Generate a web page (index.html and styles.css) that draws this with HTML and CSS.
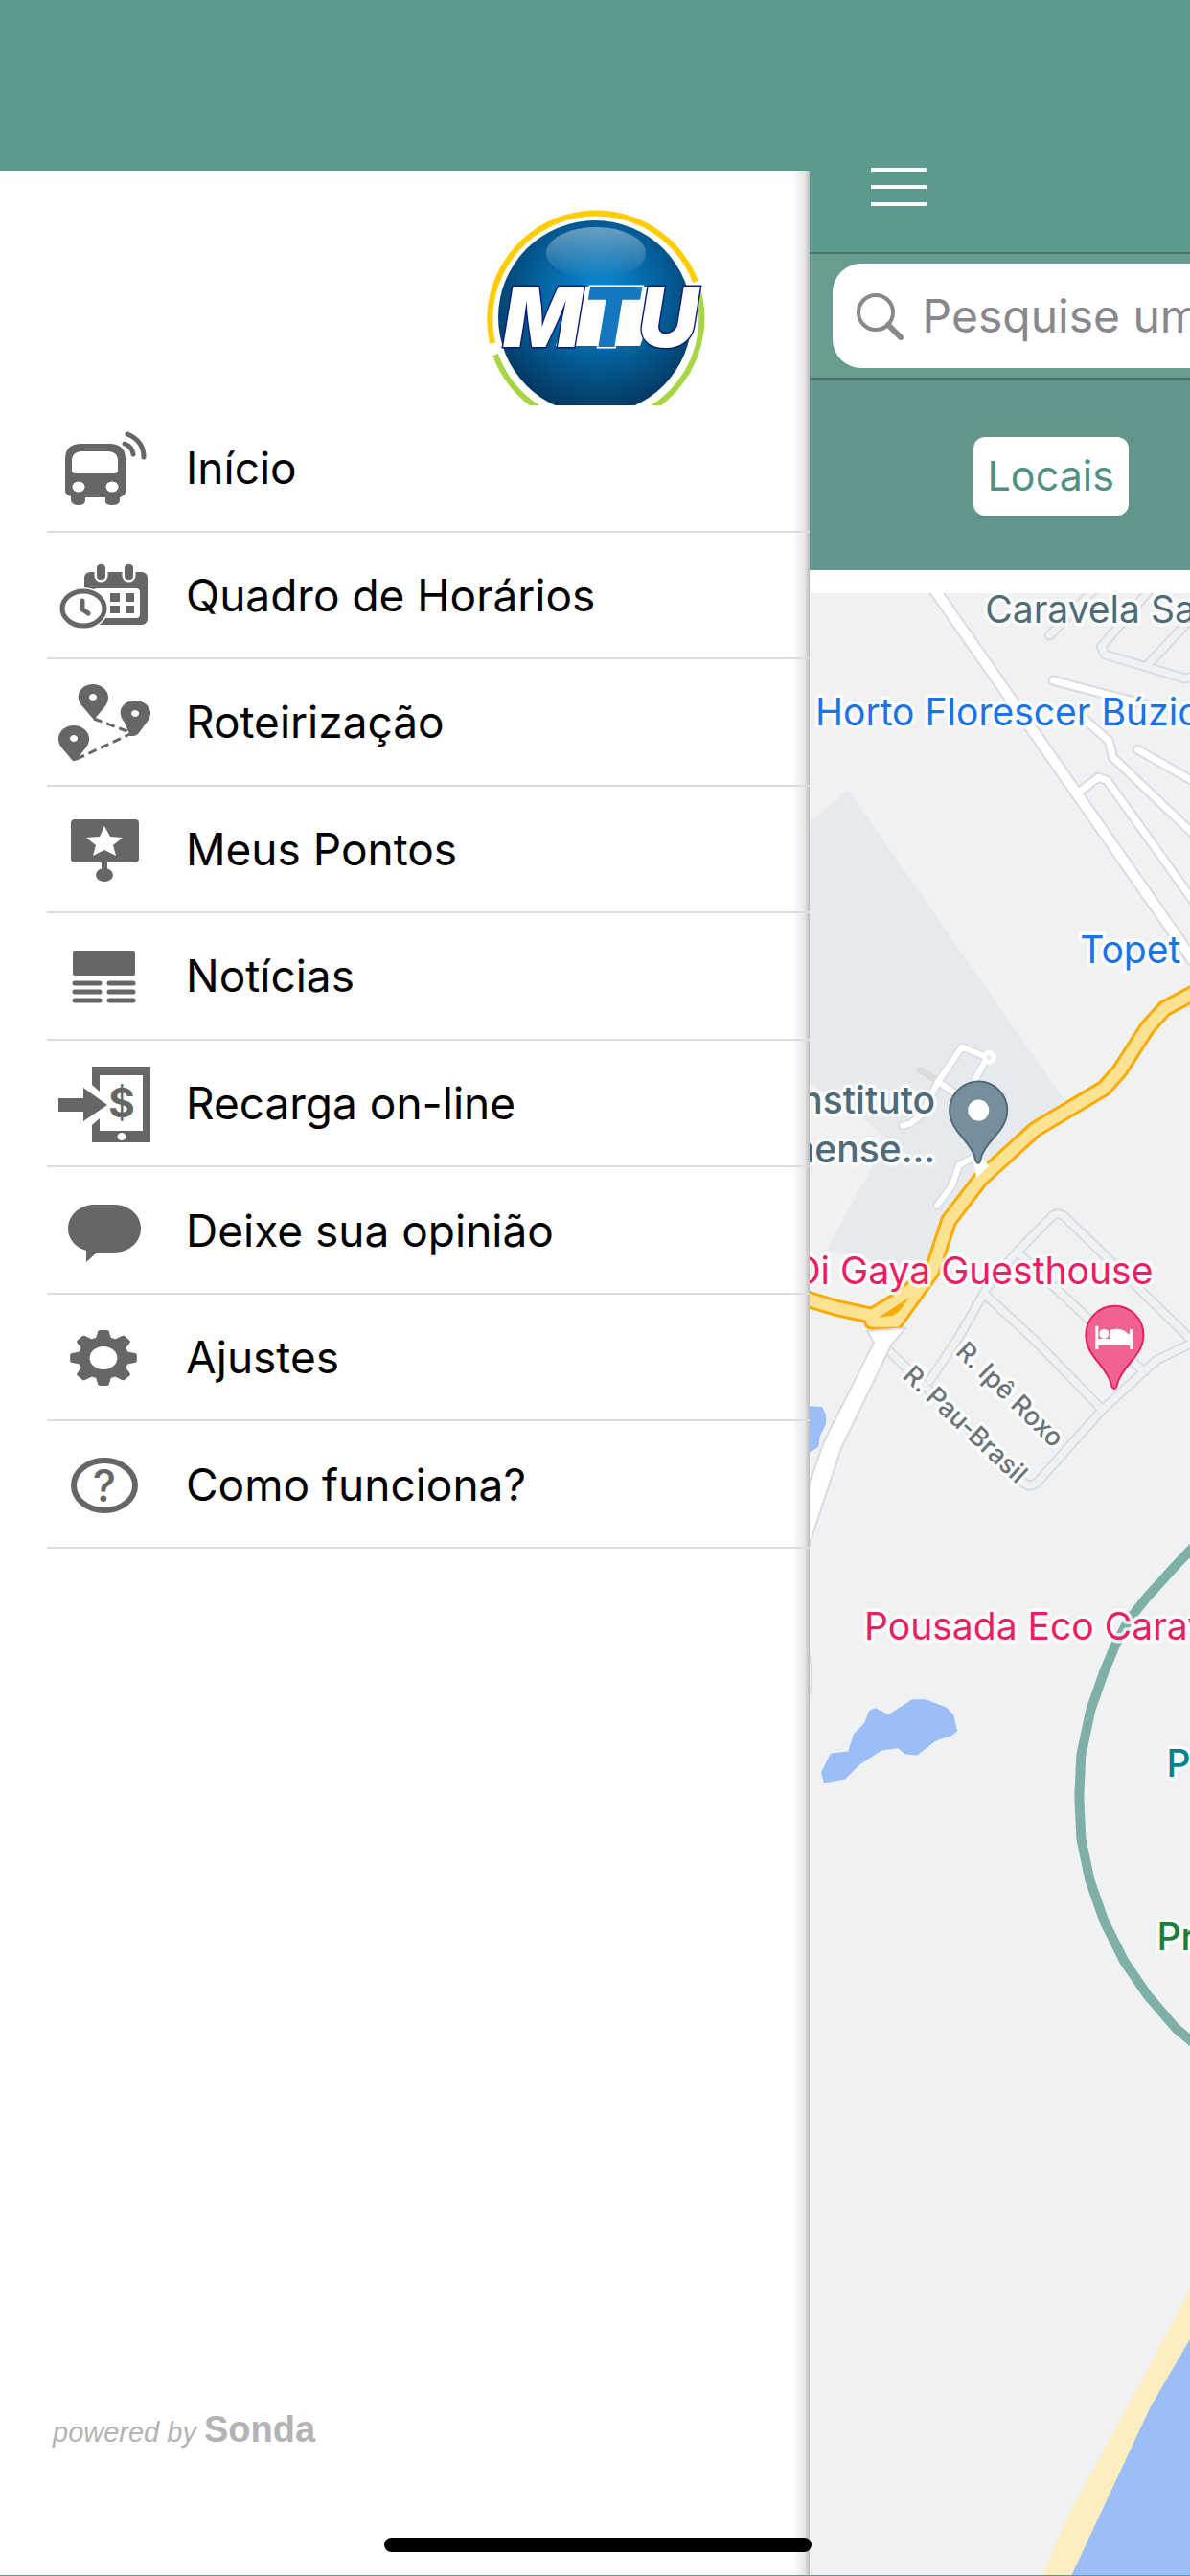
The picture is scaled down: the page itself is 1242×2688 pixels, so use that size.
FILE: index.html
```html
<!DOCTYPE html>
<html lang="pt-BR">
<head>
  <meta charset="UTF-8">
  <meta name="viewport" content="width=device-width, initial-scale=1">
  <title>MTU</title>
  <link rel="stylesheet" href="styles.css">
</head>
<body>
  <div class="app">
    <aside class="drawer">
      <div class="logo">
        <svg viewBox="508 216 228 207" role="img" aria-label="MTU">
          <defs>
            <radialGradient id="sphere" cx="0.52" cy="0.38" r="0.62">
              <stop offset="0" stop-color="#0b8bd6"/>
              <stop offset="0.5" stop-color="#04639f"/>
              <stop offset="1" stop-color="#04365f"/>
            </radialGradient>
            <linearGradient id="shine" x1="0" y1="0" x2="0" y2="1">
              <stop offset="0" stop-color="#fff" stop-opacity="0.4"/>
              <stop offset="1" stop-color="#fff" stop-opacity="0"/>
            </linearGradient>
          </defs>
          <path d="M514 358A111 111 0 0 1 726 294" fill="none" stroke="#fc0" stroke-width="6"/>
          <path d="M517 370A111 111 0 0 0 621 443A111 111 0 0 0 728 301" fill="none" stroke="#a8d544" stroke-width="6"/>
          <circle cx="621" cy="331" r="101" fill="url(#sphere)"/>
          <ellipse cx="622" cy="264" rx="52" ry="27" fill="url(#shine)"/>
          <path d="M602 299H690L668 361H580Z" fill="#fff"/>
          <text class="logo-text" x="525" y="362">M<tspan class="logo-t">T</tspan>U</text>
        </svg>
      </div>

      <nav>
        <ul class="menu">
          <li><a href="#">
            <svg class="icon" viewBox="0 0 100 90">
              <path fill-rule="evenodd" d="M10 36Q10 20 27 20H56Q73 20 73 36V70Q73 74 67 76V79Q67 84 59 84T52 79V76H31V79Q31 84 24 84T16 79V75Q10 73 10 69ZM17 38V48Q17 51 21 51H61Q65 51 65 48V38Q65 28 54 28H28Q17 28 17 38Z"/>
              <ellipse class="hole" cx="24" cy="65" rx="6.5" ry="5.5"/>
              <ellipse class="hole" cx="59" cy="65" rx="6.5" ry="5.5"/>
              <path class="line" d="M72 20Q80 23 81 31M75 10Q92 17 92 34"/>
            </svg>
            <span>Início</span></a></li>
          <li><a href="#">
            <svg class="icon" viewBox="0 0 100 90">
              <rect x="30" y="21" width="66" height="55" rx="6"/>
              <rect class="hole" x="39" y="38" width="49" height="31" rx="4"/>
              <rect class="halo" x="43" y="13" width="9" height="16" rx="4"/>
              <rect class="halo" x="72" y="13" width="9" height="16" rx="4"/>
              <path d="M57 43H67V52H57ZM73 43H82V52H73ZM57 56H67V64H57ZM73 56H82V64H73Z"/>
              <ellipse class="hole" cx="29" cy="59" rx="26" ry="22"/>
              <ellipse class="line" cx="29" cy="59" rx="22" ry="18"/>
              <path class="line" d="M28 51V60L34 64"/>
            </svg>
            <span>Quadro de Horários</span></a></li>
          <li><a href="#">
            <svg class="icon" viewBox="0 0 100 90">
              <path class="dash" d="M40 42L80 57L20 85"/>
              <path fill-rule="evenodd" d="M40 43L28 29C18 18 27 6 39 6S61 18 51 30ZM39 16a4 3.5 0 1 0 .1 0Z"/>
              <path fill-rule="evenodd" d="M82 60H78L72 46C62 34 71 23 83 23S105 34 95 46L86 58ZM83 33a4 3.5 0 1 0 .1 0Z"/>
              <path fill-rule="evenodd" d="M21 86H18L7 73C-3 61 7 49 19 49S41 61 31 73ZM19 59a4 3.5 0 1 0 .1 0Z"/>
            </svg>
            <span>Roteirização</span></a></li>
          <li><a href="#">
            <svg class="icon" viewBox="0 0 100 90">
              <rect x="16" y="14" width="71" height="45" rx="4"/>
              <path d="M48 58H54V67H48Z"/>
              <ellipse cx="51" cy="72" rx="9" ry="7"/>
              <path class="hole" d="M51 21L57 32L70 33L60 41L63 52L51 46L39 52L42 41L32 33L46 32Z"/>
            </svg>
            <span>Meus Pontos</span></a></li>
          <li><a href="#">
            <svg class="icon" viewBox="0 0 100 90">
              <rect x="18" y="19" width="65" height="26" rx="2"/>
              <path class="line" d="M20 53H46M56 53H81M20 62H46M56 62H81M20 71H46M56 71H81"/>
            </svg>
            <span>Notícias</span></a></li>
          <li><a href="#">
            <svg class="icon" viewBox="0 0 100 90">
              <path fill-rule="evenodd" d="M38 7H99V86H38ZM46 16V74H91V16Z"/>
              <ellipse class="hole" cx="69" cy="80" rx="4.5" ry="4"/>
              <path class="hole" d="M30 19L62 47L30 75Z"/>
              <path d="M3 40H29V29L54 47L29 64V54H3Z"/>
              <text x="69" y="60" font-size="42" font-weight="700">$</text>
            </svg>
            <span>Recarga on-line</span></a></li>
          <li><a href="#">
            <svg class="icon" viewBox="0 0 100 90">
              <path d="M41 18H61C77 18 89 29 89 43S77 68 61 68H43L32 78V66C21 63 13 54 13 43C13 29 25 18 41 18Z"/>
            </svg>
            <span>Deixe sua opinião</span></a></li>
          <li><a href="#">
            <svg class="icon" viewBox="0 0 100 90">
              <g transform="translate(50 46) scale(1.2 1)">
                <circle r="17" fill="none" stroke="#666" stroke-width="10"/>
                <g id="teeth">
                  <path id="tooth" d="M-7 -19L-5 -27Q-5 -29 -3 -29H3Q5 -29 5 -27L7 -19Z"/>
                  <use href="#tooth" transform="rotate(45)"/>
                  <use href="#tooth" transform="rotate(90)"/>
                  <use href="#tooth" transform="rotate(135)"/>
                </g>
                <use href="#teeth" transform="rotate(180)"/>
              </g>
            </svg>
            <span>Ajustes</span></a></li>
          <li><a href="#">
            <svg class="icon" viewBox="0 0 100 90">
              <ellipse cx="51" cy="46" rx="32" ry="26" fill="none" stroke="#666" stroke-width="6"/>
              <text x="51" y="63" font-size="46" font-weight="500">?</text>
            </svg>
            <span>Como funciona?</span></a></li>
        </ul>
      </nav>

      <p class="powered"><em>powered by</em> <strong>Sonda</strong></p>
    </aside>

    <main class="page">
      <header class="toolbar">
        <button class="menu-button" type="button" aria-label="Menu">
          <svg viewBox="0 0 58 42"><path d="M0 3H58M0 21H58M0 39H58" stroke="#fff" stroke-width="4"/></svg>
        </button>
      </header>
      <div class="search">
        <label class="search-box">
          <svg viewBox="0 0 50 50"><circle cx="21" cy="21" r="18" fill="none" stroke="#88878c" stroke-width="4"/><path d="M34 34L47 47" stroke="#88878c" stroke-width="6" stroke-linecap="round"/></svg>
          <input type="text" placeholder="Pesquise um" aria-label="Pesquise um">
        </label>
      </div>
      <div class="tabs">
        <button type="button">Locais</button>
      </div>
      <div class="map">
        <svg viewBox="845 619 397 2068" preserveAspectRatio="xMinYMin slice">
          <defs>
            <path id="lanes" d="M1095 663L1140 617M1245 706L1236 708L1200 697L1153 683L1149 675L1200 615M1198 693L1245 643M970 1440L1000 1395L1030 1343L1060 1307L1098 1268Q1103 1264 1110 1268L1245 1399M1063 1307L1137 1377L1193 1430M1028 1350L1080 1398L1150 1470M927 1408L1068 1546Q1075 1552 1083 1545L1150 1470L1207 1418L1245 1400"/>
            <path id="streets" d="M1125 827L1146 811L1155 814L1245 940M1099 710L1160 726L1200 736M1120 740L1157 773L1161 790L1245 870M1187 782L1245 815"/>
            <path id="campus" d="M979 1128L1004 1092L1030 1103L1018 1125M979 1128L996 1140M979 1128L962 1162L950 1172L942 1174M1020 1205L1001 1215L993 1237L978 1257"/>
            <path id="highway" d="M840 1354L873 1364L910 1372L940 1354L973 1325M910 1378L935 1378L973 1325L990 1273L1023 1230L1080 1178L1152 1135L1168 1117L1197 1072L1215 1052L1245 1036"/>
          </defs>

          <!-- land, water and beach -->
          <path fill="#e6e9ed" d="M845 858L885 824L1110 1147L1023 1230L985 1290L965 1330L863 1303L910 1217L920 1183L903 1168L845 1130Z"/>
          <path fill="#9bbdf8" d="M845 1466L858 1467L862 1475V1485L856 1497L854 1509L846 1514H845Z"/>
          <path fill="#9bbdf8" d="M867 1828L885 1826L891 1808L902 1797L907 1784L914 1781L927 1788L952 1772H966L987 1780L995 1788L999 1805L993 1810L977 1815L957 1830L945 1829L937 1823L920 1825L897 1840L882 1855L860 1859L857 1848Z"/>
          <path fill="#fdeec0" d="M1242 2385L1203 2460L1113 2625L1087 2687H1242Z"/>
          <path fill="#9bbdf8" d="M1242 2438L1200 2510L1117 2687H1242Z"/>
          <path fill="none" stroke="#dcdfe3" stroke-width="2" d="M845 1725Q849 1750 845 1768"/>

          <!-- roads: casing first, then the fill -->
          <g class="road">
            <use href="#lanes" stroke="#d9dce1" stroke-width="11"/>
            <use href="#lanes" stroke="#eff1f3" stroke-width="7"/>
            <path stroke="#d9dbe0" stroke-width="14" d="M975 615L1245 1002"/>
            <use href="#streets" stroke="#d9dbe0" stroke-width="11"/>
            <use href="#campus" stroke="#d9dbe0" stroke-width="9"/>
            <path stroke="#d9dbe0" stroke-width="7" d="M960 1116L979 1128"/>
            <path stroke="#fff" stroke-width="10" d="M975 615L1245 1002"/>
            <use href="#streets" stroke="#fff" stroke-width="7"/>
            <use href="#campus" stroke="#fff" stroke-width="6"/>
            <circle cx="1032" cy="1103" r="5" fill="#e6e9ed" stroke="#fff" stroke-width="5"/>
            <use href="#highway" stroke="#f9ab00" stroke-width="18"/>
            <use href="#highway" stroke="#fde293" stroke-width="12"/>
          </g>
          <path fill="#f9ab00" d="M917 1374L949 1353L938 1368L932 1372Z"/>
          <path fill="#fff" stroke="#d9dbe0" stroke-width="2" d="M905 1388L912 1400L860 1503L840 1560V1625L878 1510L930 1403L945 1385Z"/>
          <path fill="#fff" d="M1015 1208H1026L1032 1216L1019 1228Z"/>

          <path class="radius" d="M1250 1608L1227 1632L1197 1665L1177 1690L1163 1717L1152 1743L1138 1783L1128 1830L1126 1873L1128 1917L1137 1960L1152 2003L1173 2045L1197 2080L1227 2115L1250 2134"/>

          <!-- pins -->
          <path fill="#768f9b" stroke="#4e6b79" stroke-width="2" d="M1021 1213Q1018 1213 1017 1206C1012 1189 991 1180 991 1158A30 30 0 0 1 1051 1158C1051 1180 1029 1189 1024 1206Q1023 1213 1021 1213Z"/>
          <circle cx="1021" cy="1158" r="11" fill="#fff"/>
          <path fill="#f06292" stroke="#e91e63" stroke-width="2" d="M1163 1448Q1160 1448 1159 1442C1154 1424 1133 1414 1133 1392A30 30 0 0 1 1193 1392C1193 1414 1171 1424 1166 1442Q1165 1448 1163 1448Z"/>
          <path fill="#fff" d="M1143 1383H1146V1396H1158V1387Q1171 1383 1178 1392L1179 1386H1182V1407H1179V1403H1146V1407H1143Z"/>
          <circle cx="1152" cy="1391" r="5" fill="#fff"/>

          <!-- labels -->
          <g class="place">
            <text class="slate" x="1028" y="650">Caravela Sa</text>
            <text class="blue" x="851" y="757">Horto Florescer Búzio</text>
            <text class="blue" x="1127" y="1005">Topet</text>
            <text class="slate medium" x="976" y="1161" text-anchor="end">Instituto</text>
            <text class="slate medium" x="976" y="1212" text-anchor="end">nense...</text>
            <text class="pink" x="1203" y="1339" text-anchor="end">Di Gaya Guesthouse</text>
            <text class="pink" x="902" y="1710">Pousada Eco Carav</text>
            <text class="teal medium" x="1217" y="1853">P</text>
            <text class="green medium" x="1207" y="2033">Pr</text>
            <text class="street" transform="translate(996 1411) rotate(44)">R. Ipê Roxo</text>
            <text class="street" transform="translate(941 1436) rotate(43)">R. Pau-Brasil</text>
          </g>
        </svg>
      </div>
    </main>
  </div>
  <div class="home-bar"></div>
</body>
</html>
```
FILE: styles.css
```css
* {
  box-sizing: border-box;
}
body {
  margin: 0;
  background-color: #5c998f;
  font-family: Inter, "Liberation Sans", sans-serif;
}
button, input {
  font-family: inherit;
  border: 0;
}
.app {
  display: flex;
  height: 100vh;
  overflow: hidden;
  border-bottom: 1px solid #5c998f;
}

/* side menu */
.drawer {
  flex: 0 0 68%;
  display: flex;
  flex-direction: column;
  border-top: 178px solid #5c998f;
  background: linear-gradient(to left, #bbb, #e6e6e6 5px, #fff 18px);
}
.logo {
  height: 245px;
  padding: 38px 0 0 508px;
}
.logo svg {
  display: block;
  width: 228px;
  height: 207px;
}
.logo-text {
  font-weight: 900;
  font-style: italic;
  font-size: 86px;
  fill: #fff;
  stroke: #0a1f78;
  stroke-width: 3px;
  paint-order: stroke;
}
.logo-t {
  fill: #1478c0;
  stroke: #fff;
}
.menu {
  display: grid;
  grid-auto-rows: 1fr;
  min-height: 1193px;
  margin: 0 0 0 49px;
  padding: 0;
  list-style: none;
}
.menu li {
  border-bottom: 2px solid #dcdcdc;
}
.menu a {
  display: flex;
  align-items: center;
  gap: 36px;
  height: 100%;
  padding-left: 9px;
  color: #000;
  font-size: 46px;
  text-decoration: none;
}
.icon {
  width: 100px;
  height: 90px;
  fill: #666;
}
.icon text {
  text-anchor: middle;
}
.icon .hole {
  fill: #fff;
}
.icon .halo {
  stroke: #fff;
  stroke-width: 5px;
  paint-order: stroke;
}
.icon .line {
  fill: none;
  stroke: #666;
  stroke-width: 5px;
  stroke-linecap: round;
}
.icon .dash {
  fill: none;
  stroke: #666;
  stroke-width: 3px;
  stroke-dasharray: 9 5;
}
.powered {
  margin: auto 0 0;
  padding: 0 0 128px 55px;
  color: #b3b3b3;
  font-family: "Liberation Sans", Arial, sans-serif;
  font-size: 29px;
  line-height: 42px;
}
.powered strong {
  font-size: 38px;
}

/* page behind the menu */
.page {
  flex: 1;
  min-width: 0;
  display: flex;
  flex-direction: column;
}
.toolbar {
  height: 265px;
  padding: 174px 0 0 64px;
  border-bottom: 2px solid #47736b;
}
.menu-button {
  display: block;
  padding: 0;
  background: none;
}
.menu-button svg {
  display: block;
  width: 58px;
  height: 42px;
}
.search {
  padding: 10px 0 10px 24px;
  background-color: #699c91;
  border-bottom: 2px solid #47736b;
}
.search-box {
  display: flex;
  align-items: center;
  gap: 20px;
  height: 109px;
  padding-left: 24px;
  background-color: #fff;
  border-radius: 30px 0 0 30px;
}
.search-box svg {
  flex: none;
  width: 50px;
  height: 50px;
}
.search-box input {
  flex: 1;
  min-width: 0;
  padding: 0;
  background: none;
  font-size: 48px;
}
.search-box input::placeholder {
  color: #88878c;
}
.tabs {
  padding: 60px 0 57px 171px;
  background-color: #62958b;
}
.tabs button {
  display: block;
  height: 82px;
  padding: 0 15px 2px;
  background-color: #fff;
  border-radius: 12px;
  color: #4f9084;
  font-size: 43px;
}
.map {
  flex: 1;
  min-height: 0;
  border-top: 24px solid #fff;
  background-color: #eff1f3;
}
.map svg {
  display: block;
  width: 100%;
  height: 100%;
}
.road {
  fill: none;
  stroke-linecap: round;
  stroke-linejoin: round;
}
.radius {
  fill: none;
  stroke: #7fb0a8;
  stroke-width: 10px;
}
.place {
  font-size: 39px;
  stroke: #fff;
  stroke-opacity: 0.8;
  stroke-width: 7px;
  stroke-linejoin: round;
  paint-order: stroke;
}
.slate { fill: #4f6b78; }
.blue { fill: #1a73e8; }
.pink { fill: #e91e63; }
.teal { fill: #00838f; }
.green { fill: #188038; }
.medium { font-weight: 500; }
.street {
  fill: #6b7478;
  font-size: 27px;
  font-weight: 500;
}

.home-bar {
  position: fixed;
  left: 401px;
  bottom: 25px;
  width: 446px;
  height: 15px;
  border-radius: 8px;
  background-color: #000;
}
```
